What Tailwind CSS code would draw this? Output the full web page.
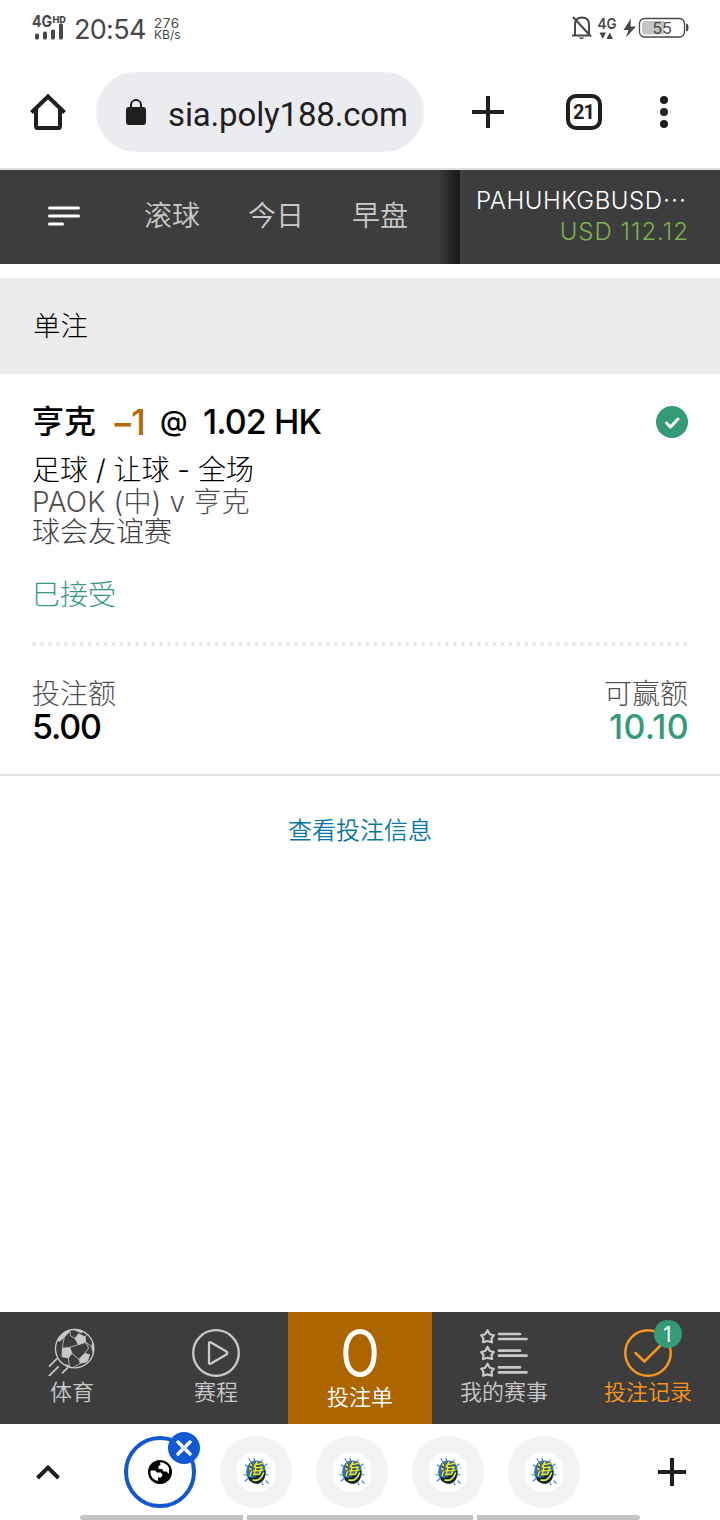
<!DOCTYPE html>
<html lang="zh-CN">
<head>
<meta charset="utf-8">
<title>单注</title>
<script src="https://cdn.jsdelivr.net/npm/@tailwindcss/browser@4"></script>
</head>
<body class="w-[720px] h-[1520px] bg-white overflow-hidden font-['Inter','Noto_Sans_CJK_SC',sans-serif] font-[350] leading-none text-black whitespace-nowrap">
<div class="w-[720px] h-[1520px] flex flex-col">

  <!-- Status bar -->
  <header class="h-14 shrink-0 flex items-center justify-between pl-8 pr-[30px] text-[#484848]">
    <div class="flex items-center">
      <svg class="w-9 h-7 mt-[-1px] overflow-visible" viewBox="0 0 36 28" fill="#484848">
        <text x="0" y="13" font-family="Inter" font-size="16" font-weight="700" textLength="20" lengthAdjust="spacingAndGlyphs">4G</text>
        <text x="20.5" y="8.500" font-family="Inter" font-size="9.500" font-weight="800" textLength="13.500" lengthAdjust="spacingAndGlyphs">HD</text>
        <rect x="3" y="19.500" width="4" height="6" rx="1.500"/><rect x="11" y="17.500" width="4" height="8" rx="1.500"/><rect x="19" y="15.500" width="4" height="10" rx="1.500"/><rect x="27" y="9.500" width="4" height="16" rx="1.500"/>
      </svg>
      <span class="ml-[6px] mt-[3px] w-[80px] text-[27px] font-normal tracking-[-0.7px]">20:54</span>
      <span class="mt-px flex flex-col text-[13.5px] leading-[12px] font-normal"><span class="tracking-[0.5px]">276</span><span class="text-[12px]">KB/s</span></span>
    </div>
    <svg class="w-[118px] h-7" viewBox="0 0 118 28" fill="#484848">
      <g fill="none" stroke="#484848" stroke-width="2"><path d="M3 20.500V10.500Q3 3.500 10 3.500Q17 3.500 17 10.500V20.500M0 21.500H17M1 3L19 22.500"/></g>
      <path d="M6.500 23.500h6q-3 3.500-6 0z"/>
      <text x="25.500" y="15" font-family="Inter" font-size="15" font-weight="600" textLength="19" lengthAdjust="spacingAndGlyphs">4G</text>
      <path d="M27.500 18.500h6.500l-3.250 6.500zM34.500 25h6.500l-3.250-6.500zM59 4.500L51.500 16h5l-2.500 7.500L64 12.500h-5.500z"/>
      <rect x="67.500" y="4.500" width="45" height="18.500" rx="5" fill="none" stroke="#484848" stroke-width="1.300"/>
      <path d="M70 10q0-3 3-3h19v13.500H73q-3 0-3-3z" fill="#c4c4c4"/>
      <path d="M114 9.500q2.500 0 2.500 4t-2.500 4z"/>
      <text x="80.500" y="19.500" font-family="Inter" font-size="16" font-weight="400" textLength="19.500" lengthAdjust="spacingAndGlyphs">55</text>
    </svg>
  </header>

  <!-- Browser toolbar -->
  <div class="h-[114px] shrink-0 flex items-center border-b-2 border-[#e0e0e0] pl-[30px]">
    <svg class="w-9 h-9" viewBox="0 0 36 36" fill="none" stroke="#1f1f1f" stroke-width="4"><path d="M1.500 18.500L18 2.500L34.500 18.500M6 15V32.500Q6 34 7.500 34H28.500Q30 34 30 32.500V15"/></svg>
    <div class="ml-[30px] w-[328px] h-20 rounded-full bg-[#ebecf0] flex items-center pl-[30px] text-[#1f1f1f]">
      <svg class="w-5 h-[26px]" viewBox="0 0 20 26"><rect y="8" width="20" height="18" rx="3" fill="#1f1f1f"/><path d="M5 9V6a5 5 0 0 1 10 0V9" fill="none" stroke="#1f1f1f" stroke-width="2"/></svg>
      <span class="ml-[22px] mt-[5px] font-['Roboto'] font-normal text-[33px] tracking-[-0.15px] leading-[40px]">sia.poly188.com</span>
    </div>
    <svg class="ml-12 w-8 h-8" viewBox="0 0 32 32" stroke="#1f1f1f" stroke-width="4"><path d="M0 16H32M16 0V32"/></svg>
    <div class="ml-[62px] w-9 h-9 rounded-[10px] border-4 border-[#1f1f1f] flex items-center justify-center font-['Roboto'] font-bold text-[20px] tracking-[-1px] text-[#1f1f1f]"><span class="-ml-px">21</span></div>
    <div class="ml-[58px] flex flex-col gap-1"><i class="size-2 rounded-full bg-[#1f1f1f]"></i><i class="size-2 rounded-full bg-[#1f1f1f]"></i><i class="size-2 rounded-full bg-[#1f1f1f]"></i></div>
  </div>

  <!-- Site navigation -->
  <nav class="h-[94px] shrink-0 flex bg-[#3d3d3d]">
    <div class="w-[460px] flex items-center pl-12 pb-0.5 bg-[linear-gradient(to_right,transparent_438px,#1c1c1c_456px)]">
      <svg class="w-8 h-5" viewBox="0 0 32 20" stroke="#fff" stroke-width="3" stroke-linecap="round"><path d="M1.500 2H30.500M1.500 10H30.500M1.500 18H14.500"/></svg>
      <div class="ml-16 flex gap-12 text-[28px] text-[#c9c9c9] leading-[40px]"><span>滚球</span><span>今日</span><span>早盘</span></div>
    </div>
    <div class="flex-1 flex flex-col pt-[15px] pl-4 pr-8 text-2xl leading-[31px] font-light">
      <span class="text-white tracking-[0.5px]">PAHUHKGBUSD⋯</span>
      <span class="-mr-px text-right text-[#7eb04f] tracking-[1px]">USD 112.12</span>
    </div>
  </nav>

  <h2 class="mt-3.5 h-24 shrink-0 bg-[#ececec] flex items-center pl-[33px] text-[27.5px] leading-[40px] font-light">单注</h2>

  <!-- Bet card -->
  <section class="h-[402px] shrink-0 px-8 border-b-2 border-[#e2e2e2] text-[28px] font-light">
    <div class="h-24 flex items-center justify-between">
      <h3 class="flex items-center text-[34px] leading-[40px] font-medium">
        <span class="w-[79px] text-[32px]">亨克</span><span class="w-[49px] text-[#b86a00] tracking-[-3px] text-[35px]">−1</span><span class="w-[43px] text-[28px] -mt-[3px]">@</span><span class="tracking-[-0.9px]">1.02 HK</span>
      </h3>
      <svg class="size-8" viewBox="0 0 32 32"><circle cx="16" cy="16" r="16" fill="#359a7a"/><path d="M10.500 17L14.500 21L22 13" fill="none" stroke="#fff" stroke-width="3" stroke-linecap="round" stroke-linejoin="round"/></svg>
    </div>
    <p class="-mt-4 h-8 leading-[32px]">足球 / 让球 - 全场</p>
    <p class="h-[31px] leading-[33px] text-[#505050] tracking-[0.15px]">PAOK (中) v 亨克</p>
    <p class="h-[30px] leading-[31px] text-[#404040]">球会友谊赛</p>
    <p class="mt-8 h-8 leading-[32px] text-[#359a7a]">巳接受</p>
    <div class="mt-[31px] border-t-4 border-dotted border-[#e6e6e6]"></div>
    <div class="mt-[32px] flex justify-between">
      <div class="flex flex-col"><span class="leading-[32px] text-[#505050]">投注额</span><span class="font-medium text-[34px] tracking-[-1.2px] leading-[33px]">5.00</span></div>
      <div class="flex flex-col items-end"><span class="leading-[32px] text-[#505050]">可赢额</span><span class="-mr-px font-medium text-[34px] tracking-[0.3px] leading-[33px] text-[#359a7a]">10.10</span></div>
    </div>
  </section>

  <a class="mt-[39px] self-center text-2xl leading-[32px] text-[#0a78a2]">查看投注信息</a>

  <!-- Bottom navigation -->
  <nav class="mt-auto h-28 shrink-0 grid grid-cols-5 bg-[#3d3d3d] text-[22px] leading-[32px] text-[#c9c9c9]">
    <div class="flex flex-col items-center pt-4">
      <svg class="w-12 h-12" viewBox="144 84 144 144" fill="none" stroke="#c9c9c9" stroke-width="2.500">
        <clipPath id="ball"><circle cx="224" cy="146" r="58"/></clipPath>
        <g clip-path="url(#ball)">
          <path fill="#c9c9c9" d="M225 115L236 101L256 111L257 127L235 134ZM187 145L209 142L216 160L205 174L186 170ZM237 178L254 160L269 164L261 185L241 190ZM170 120L178 98L202 86L209 95L193 111L179 124ZM188 193L208 197L214 208L195 208ZM278 128L290 140L279 157L275 142ZM225 84L254 92L244 98L226 91Z"/>
          <path d="M209 94L212 108L225 115M193 111L189 130L187 145M235 134L209 142M216 160L237 178M257 127L266 144L254 160M257 127L276 140M256 111L262 102M205 174L208 197M241 190L214 205"/>
        </g>
        <circle cx="224" cy="146" r="57.500" stroke-width="4"/>
        <path d="M147 200L172 175M146 229L176 199M186 220L204 202" stroke-width="5"/>
      </svg><span>体育</span>
    </div>
    <div class="flex flex-col items-center pt-4">
      <svg class="w-12 h-12 mt-px -mb-px" viewBox="0 0 48 48" fill="none" stroke="#c9c9c9" stroke-width="2.300" stroke-linejoin="round"><circle cx="24" cy="24" r="22.800"/><path d="M17 14.500Q17 12.500 19 13.500L34 22.300Q36.500 24 34 25.700L19 34.500Q17 35.500 17 33.500Z"/></svg><span>赛程</span>
    </div>
    <div class="flex flex-col items-center pt-4 bg-[#ad6500] text-white">
      <svg class="w-9 h-12 mt-px -mb-px" viewBox="0 0 36 48"><path d="M18 2.500C26 2.500 32.200 10 32.200 24S26 45.500 18 45.500S3.800 38 3.800 24S10 2.500 18 2.500Z" fill="none" stroke="#fff" stroke-width="5"/></svg><span class="mt-[5px]">投注单</span>
    </div>
    <div class="flex flex-col items-center pt-4">
      <svg class="w-12 h-12 mt-px -mb-px" viewBox="0 0 48 48" fill="none" stroke="#c9c9c9" stroke-width="2.200" stroke-linejoin="round">
        <g id="fav"><path d="M7.500 1.300L9.800 5.300L13.800 6.300L11.500 9.300L12 13.300L7.500 12L3 13.300L3.500 9.300L1.200 6.300L5.200 5.300Z"/><path stroke-width="2.700" stroke-linecap="round" d="M19 5H40M19 10H46.500"/></g>
        <use href="#fav" y="16.700"/><use href="#fav" y="33.400"/>
      </svg><span>我的赛事</span>
    </div>
    <div class="relative flex flex-col items-center pt-4 text-[#fb9517]">
      <svg class="w-12 h-12 mt-px -mb-px" viewBox="0 0 48 48" fill="none" stroke="#f7951d" stroke-width="2.500"><circle cx="24" cy="24" r="22.700"/><path d="M11.500 24L20.500 32.500L36 17" stroke-linecap="round"/></svg><span>投注记录</span>
      <span class="absolute left-[78px] top-2 size-7 rounded-full bg-[#359a7a] text-white text-center leading-[27px] font-normal font-['Noto_Sans']">1</span>
    </div>
  </nav>

  <!-- Tab strip -->
  <footer class="h-24 shrink-0 flex flex-col">
    <div class="mt-3 h-[72px] flex items-center pl-9">
      <svg class="w-6 h-4" viewBox="0 0 24 16" fill="none" stroke="#1f1f1f" stroke-width="4"><path d="M1.500 14L12 3.500L22.500 14"/></svg>
      <div class="relative ml-16 size-[72px] rounded-full border-4 border-[#1158d3] flex items-center justify-center">
        <svg class="size-6" viewBox="0 0 24 24"><circle cx="12" cy="12" r="12"/><path fill="#fff" d="M2.500 10.500H7L9 12.500H13L14.500 15L13 17.500H10V21Q4 19.500 2.500 14ZM12 2.500H15Q19 4 21 8V14L18.500 11.500H15.500L14 9H10.500V6L12.500 5Z"/></svg>
        <svg class="absolute left-10 -top-2 size-8" viewBox="0 0 32 32"><circle cx="16" cy="16" r="16" fill="#1158d3"/><path d="M10 10L22 22M22 10L10 22" stroke="#fff" stroke-width="3.500" stroke-linecap="round"/></svg>
      </div>
      <div class="ml-6 flex gap-6">
        <div class="size-[72px] rounded-full bg-[#f1f3f4] flex items-center justify-center"><div class="size-10 rounded-full bg-white flex items-center justify-center">
          <svg class="size-8" viewBox="0 0 32 32" fill="none" stroke-linecap="round"><g id="logo"><path stroke="#4b82bd" stroke-width="1.200" d="M5 9L9 11M27 8L23 11M9 3L12 7M14 2.500L15 6M22 4L20 7M4 19L7 18.500M5 25L9 22M28 19L25 18M26 25L28 27M22 27L23 29M29 12V12"/><ellipse cx="16" cy="16" rx="10" ry="11.500" fill="#3577b8"/><path d="M8 21Q12 23 19 19T25 13Q27 25 18 28Q10 27 8 21Z" fill="#17222a"/>
            <path stroke="#1d3c50" stroke-width="2.600" d="M10.500 8L11.500 9.500M9.500 12.500L11 13.500M11 20Q9.500 20 11.500 15.500M17 6L14 11M16.500 8.500L22 7.500M16 11L14 18.500L19.500 18L22 11L16 12M13.500 15L23 14M13 24Q20 26 23.500 17"/><path stroke="#f3ed31" stroke-width="1.600" d="M10.500 8L11.500 9.500M9.500 12.500L11 13.500M11 20Q9.500 20 11.500 15.500M17 6L14 11M16.500 8.500L22 7.500M16 11L14 18.500L19.500 18L22 11L16 12M13.500 15L23 14M13 24Q20 26 23.500 17"/></g></svg></div></div>
        <div class="size-[72px] rounded-full bg-[#f1f3f4] flex items-center justify-center"><div class="size-10 rounded-full bg-white flex items-center justify-center"><svg class="size-8" viewBox="0 0 32 32" fill="none" stroke-linecap="round"><use href="#logo"/></svg></div></div>
        <div class="size-[72px] rounded-full bg-[#f1f3f4] flex items-center justify-center"><div class="size-10 rounded-full bg-white flex items-center justify-center"><svg class="size-8" viewBox="0 0 32 32" fill="none" stroke-linecap="round"><use href="#logo"/></svg></div></div>
        <div class="size-[72px] rounded-full bg-[#f1f3f4] flex items-center justify-center"><div class="size-10 rounded-full bg-white flex items-center justify-center"><svg class="size-8" viewBox="0 0 32 32" fill="none" stroke-linecap="round"><use href="#logo"/></svg></div></div>
      </div>
      <svg class="ml-[78px] size-7" viewBox="0 0 28 28" stroke="#1f1f1f" stroke-width="4"><path d="M0 14H28M14 0V28"/></svg>
    </div>
    <div class="mt-[7px] h-[5px] flex gap-1 pl-20"><i class="w-[163px] rounded-l-full bg-[#c2c2c2]"></i><i class="w-[226px] bg-[#c2c2c2]"></i><i class="w-[163px] rounded-r-full bg-[#c2c2c2]"></i></div>
  </footer>
</div>
</body>
</html>
